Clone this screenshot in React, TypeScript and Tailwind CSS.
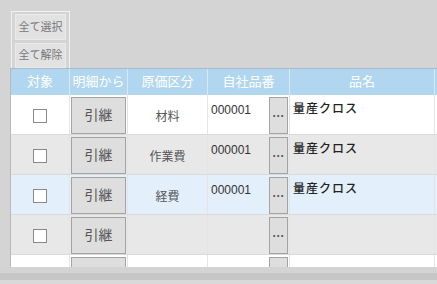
import React from 'react';

const font = { fontFamily: '"Liberation Sans", "Noto Sans CJK JP", sans-serif' };

const rows = [
    { bg: 'bg-white', kubun: '材料', code: '000001', name: '量産クロス' },
    { bg: 'bg-[#e8e8e8]', kubun: '作業費', code: '000001', name: '量産クロス' },
    { bg: 'bg-[#e3f0fb]', kubun: '経費', code: '000001', name: '量産クロス' },
    { bg: 'bg-[#e8e8e8]', kubun: '', code: '', name: '' },
    { bg: 'bg-white', kubun: '', code: '', name: '' },
];

const RowButton: React.FC<{ label: string; className: string }> = ({ label, className }) => (
    <button className={`h-[37px] border border-[#a3a3a3] bg-[#dedede] text-[#555] flex items-center justify-center ${className}`}>
        {label}
    </button>
);

export default function App() {
    return (
        <div className="w-[437px] h-[284px] bg-[#d4d4d4] overflow-hidden flex flex-col" style={font}>
            {/* select / clear panel */}
            <div className="pl-[11px] pt-[11px]">
                <div className="w-[59px] border border-b-0 border-[#f2f2f2] px-[3px] pt-[2px] flex flex-col gap-[3px]">
                    <button className="h-[26px] bg-[#e2e2e2] border border-[#ebebeb] text-[11px] text-[#777]">全て選択</button>
                    <button className="h-[25px] bg-[#e2e2e2] border border-[#ebebeb] text-[11px] text-[#777]">全て解除</button>
                </div>
            </div>

            {/* grid */}
            <div className="ml-[10px] border-l border-[#b9b9b9] h-[199px] overflow-hidden">
                <div className="flex h-[27px] border-t border-[#a8bacb] bg-[#b1d6ef] text-white text-[13px] w-[600px]">
                    <div className="w-[59px] border-r border-[#d6e9f7] flex items-center justify-center">対象</div>
                    <div className="w-[58px] border-r border-[#d6e9f7] flex items-center justify-center">明細から</div>
                    <div className="w-[80px] border-r border-[#d6e9f7] flex items-center justify-center">原価区分</div>
                    <div className="w-[82px] border-r border-[#d6e9f7] flex items-center justify-center">自社品番</div>
                    <div className="w-[145px] border-r border-[#d6e9f7] flex items-center justify-center">品名</div>
                    <div className="flex-1" />
                </div>
                {rows.map((r, i) => (
                    <div key={i} className={`flex h-[40px] border-b border-[#dadada] w-[600px] ${r.bg}`}>
                        <div className="w-[59px] border-r border-[#e4e4e4] flex items-center justify-center pt-[2px]">
                            <span className="w-[14px] h-[14px] border border-[#8a8a8a] bg-white" />
                        </div>
                        <div className="w-[58px] border-r border-[#e4e4e4] pl-[1px] pt-[2px]">
                            <RowButton label="引継" className="w-[55px] text-[14px]" />
                        </div>
                        <div className="w-[80px] border-r border-[#e4e4e4] flex items-center justify-center pt-[4px] text-[12px] text-[#555]">
                            {r.kubun}
                        </div>
                        <div className="w-[82px] border-r border-[#e4e4e4] flex pt-[2px]">
                            <div className="flex-1 pl-[3px] pt-[5px] text-[12px] text-[#333] leading-[16px]">{r.code}</div>
                            <RowButton label="···" className="w-[19px] text-[12px] mr-[1px] font-bold text-[#444]" />
                        </div>
                        <div className="w-[145px] border-r border-[#e4e4e4] pl-[3px] pt-[6px] text-[12px] text-[#222] leading-[16px] font-medium tracking-[1px]">
                            {r.name}
                        </div>
                        <div className="flex-1" />
                    </div>
                ))}
            </div>

            {/* horizontal scroll strip */}
            <div className="h-[6px] bg-[#d3d3d3]" />
            <div className="h-[7px] bg-[#c6c6c6]" />
            <div className="flex-1 bg-[#d9d9d9]" />
        </div>
    );
}
